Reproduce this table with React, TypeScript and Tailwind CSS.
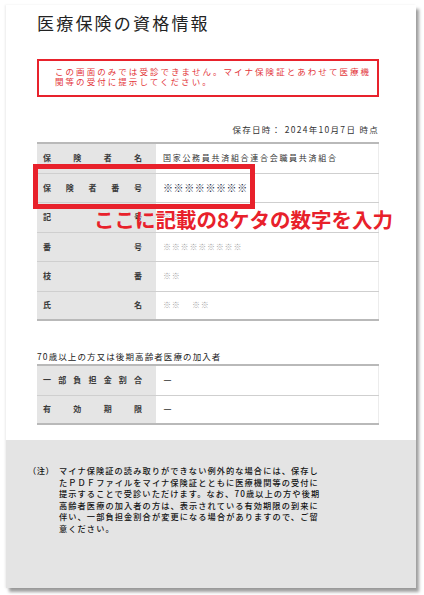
import React from "react";

const FONT = { fontFamily: '"Noto Sans CJK JP", "Noto Sans", sans-serif' };

function Label({ text }: { text: string }) {
  const chars = text.split("");
  return (
    <div className="flex h-full w-[119px] shrink-0 items-center justify-between bg-[#e5e5e5] pl-[6px] pr-[14px] text-[8px] font-bold text-[#3a3a3a]">
      {chars.map((c, i) => (
        <span key={i}>{c}</span>
      ))}
    </div>
  );
}

function Row({ label, children, last }: { label: string; children?: React.ReactNode; last?: boolean }) {
  return (
    <div
      className={
        "flex h-[29.5px] " +
        (last ? "border-b-2 border-[#b9b9b9]" : "border-b-[1.5px] border-[#cfcfcf]")
      }
    >
      <Label text={label} />
      <div className="flex flex-1 items-center border-r border-[#ececec] bg-white pl-[7px]">{children}</div>
    </div>
  );
}

const Gray = ({ children }: { children: React.ReactNode }) => (
  <span className="whitespace-pre text-[8px] tracking-[0.8px] text-[#a3a3a3]">{children}</span>
);

const NOTE_LINES = [
  "マイナ保険証の読み取りができない例外的な場合には、保存し",
  "たＰＤＦファイルをマイナ保険証とともに医療機関等の受付に",
  "提示することで受診いただけます。なお、70歳以上の方や後期",
  "高齢者医療の加入者の方は、表示されている有効期限の到来に",
  "伴い、一部負担金割合が変更になる場合がありますので、ご留",
  "意ください。",
];

export default function App() {
  return (
    <div className="min-h-[595px] w-[424px] bg-white pt-[5px]" style={FONT}>
      <div className="relative ml-[6px] h-[583px] w-[410px] bg-white shadow-[3px_4px_3px_rgba(0,0,0,0.38),-1px_0_2px_rgba(0,0,0,0.08)]">
        <div className="pl-[31px] pr-[37px] pt-[6px]">
          <h1 className="text-[17px] font-normal leading-[24px] tracking-[2.2px] text-[#222]">
            医療保険の資格情報
          </h1>

          <div className="mt-[24px] h-[38px] border-2 border-[#e8222c] pl-[16px] pt-[5px] text-[8.5px] leading-[10px] tracking-[2.05px] text-[#e3363b]">
            <div className="whitespace-nowrap">この画面のみでは受診できません。マイナ保険証とあわせて医療機</div>
            <div className="whitespace-nowrap">関等の受付に提示してください。</div>
          </div>

          <div className="mt-[26px] text-right text-[8.5px] leading-[12px] tracking-[1.3px] text-[#333]">
            保存日時： 2024年10月7日 時点
          </div>

          <div className="mt-[7px] border-t-2 border-[#b9b9b9]">
            <Row label="保険者名">
              <span className="whitespace-nowrap text-[8px] tracking-[1.7px] text-[#333]">国家公務員共済組合連合会職員共済組合</span>
            </Row>
            <Row label="保険者番号">
              <span className="text-[10px] tracking-[0.6px] text-[#27304a]">※※※※※※※※</span>
            </Row>
            <Row label="記号">
              <Gray>※※</Gray>
            </Row>
            <Row label="番号">
              <Gray>※※※※※※※※※</Gray>
            </Row>
            <Row label="枝番">
              <Gray>※※</Gray>
            </Row>
            <Row label="氏名" last>
              <Gray>{"※※　 ※※"}</Gray>
            </Row>
          </div>

          <div className="mt-[29px] whitespace-nowrap text-[8.5px] leading-[12px] tracking-[1.1px] text-[#222]">
            70歳以上の方又は後期高齢者医療の加入者
          </div>

          <div className="mt-[2px] border-t-2 border-[#b9b9b9]">
            <Row label="一部負担金割合">
              <span className="text-[9px] text-[#333]">ー</span>
            </Row>
            <Row label="有効期限" last>
              <span className="text-[9px] text-[#333]">ー</span>
            </Row>
          </div>
        </div>

        <div className="mt-[15px] flex h-[148px] bg-[#e4e4e4] pl-[22px] pt-[25px] text-[8.2px] font-medium leading-[11.5px] tracking-[1.1px] text-[#141414]">
          <div className="w-[31px] shrink-0 whitespace-nowrap tracking-[0.5px]">（注）</div>
          <div>
            {NOTE_LINES.map((l, i) => (
              <div key={i} className="whitespace-nowrap">
                {l}
              </div>
            ))}
          </div>
        </div>

        <div className="absolute left-[27px] top-[159px] h-[45px] w-[222px] border-[5px] border-[#e8212b]" />
        <div className="absolute left-[88px] top-[204px] whitespace-nowrap text-[20.5px] font-bold leading-none text-[#e8212b]">
          ここに記載の8ケタの数字を入力
        </div>
      </div>
    </div>
  );
}
